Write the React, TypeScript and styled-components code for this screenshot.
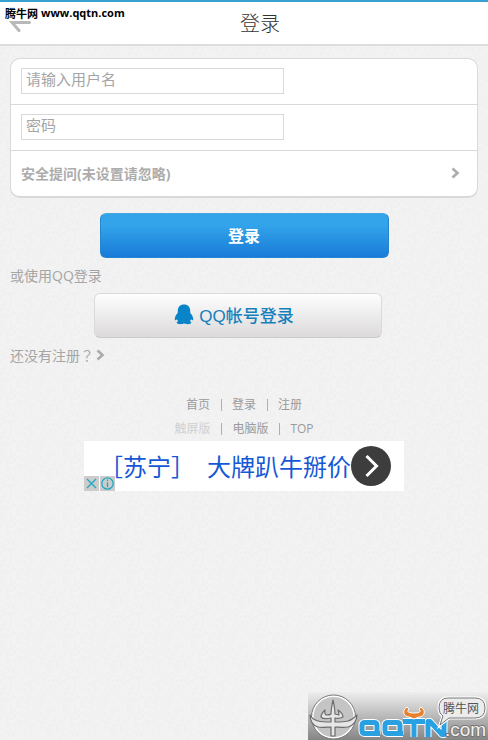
import React from "react";
import styled, { createGlobalStyle } from "styled-components";

const sans = `"Open Sans", "Noto Sans CJK SC", sans-serif`;

const grain =
  "data:image/svg+xml," +
  encodeURIComponent(
    `<svg xmlns="http://www.w3.org/2000/svg" width="64" height="64"><filter id="n"><feTurbulence type="fractalNoise" baseFrequency="0.3" numOctaves="2" stitchTiles="stitch"/><feColorMatrix values="0 0 0 0 0.4  0 0 0 0 0.4  0 0 0 0 0.4  0.12 0 0 0 -0.04"/></filter><rect width="64" height="64" filter="url(#n)"/></svg>`
  );

const GlobalStyle = createGlobalStyle`
  *, *::before, *::after { box-sizing: border-box; }
  body {
    margin: 0;
    background: #f3f3f3 url("${grain}");
    font-family: ${sans};
    font-size: 14px;
    line-height: 20px;
    color: #a5a5a5;
  }
  button, input { font-family: inherit; }
  a { color: inherit; text-decoration: none; }
`;

const Page = styled.div`
  min-height: 100vh;
`;

const Header = styled.header`
  display: flex;
  align-items: center;
  height: 46px;
  border-top: 2px solid #36a0d0;
  border-bottom: 2px solid #dddddd;
  background: #fff;
`;

const BackButton = styled.button`
  display: flex;
  width: 32px;
  padding: 6px 0 0 9px;
  border: 0;
  background: none;
  color: #b9b9b9;
  cursor: pointer;
`;

const Title = styled.h1`
  flex: 1;
  margin: 0;
  font-family: "Noto Sans CJK SC", sans-serif;
  font-size: 20px;
  line-height: 28px;
  font-weight: 300;
  text-align: center;
  color: #333;
`;

const SiteMark = styled.div`
  position: absolute;
  top: 5px;
  left: 5px;
  font: bold 11px/16px "Noto Sans CJK SC", sans-serif;
  color: #000;
  display: flex;
  gap: 3px;
`;

const Latin = styled.span`
  font-family: "Open Sans", sans-serif;
`;

const Main = styled.main`
  padding: 12px 10px 0;
`;

const Card = styled.div`
  border: 1px solid #d9d9d9;
  border-bottom-width: 2px;
  border-radius: 10px;
  background: #fff;
`;

const Field = styled.div`
  padding: 9px 10px 10px;
  border-bottom: 1px solid #d9d9d9;
  line-height: 0;
`;

const TextInput = styled.input`
  width: 263px;
  max-width: 100%;
  height: 26px;
  padding: 0 4px 4px;
  border: 1px solid #d9d9d9;
  background: #fff;
  font-size: 15px;
  color: #555;
  &::placeholder { color: #a5a5a5; opacity: 1; }
`;

const QuestionButton = styled.button`
  display: flex;
  align-items: center;
  justify-content: space-between;
  width: 100%;
  height: 45px;
  padding: 0 17px 1px 10px;
  border: 0;
  background: none;
  font-size: 14px;
  font-weight: bold;
  color: #acacac;
  cursor: pointer;
`;

const LoginButton = styled.button`
  display: block;
  width: 289px;
  max-width: 100%;
  height: 45px;
  margin: 15px auto 8px;
  padding: 0 0 2px;
  border: 1px solid #2585ce;
  border-top-color: #47a8e0;
  border-radius: 6px;
  background: linear-gradient(#33a4ea 25%, #187bd8);
  font-size: 16px;
  font-weight: bold;
  color: #fff;
  cursor: pointer;
`;

const Note = styled.p`
  margin: 0;
`;

const QQRow = styled.div`
  display: flex;
  justify-content: center;
  padding: 7px 12px 7px 0;
`;

const QQButton = styled.button`
  display: flex;
  align-items: center;
  justify-content: center;
  gap: 5px;
  width: 288px;
  max-width: 100%;
  height: 45px;
  padding: 0 8px 2px 0;
  border: 1px solid #dadada;
  border-bottom-color: #cbc9ca;
  border-radius: 6px;
  background: linear-gradient(#fefefe, #dcdadb);
  font-family: "Liberation Sans", "Noto Sans CJK SC", sans-serif;
  font-size: 17px;
  font-weight: 500;
  color: #1680bd;
  cursor: pointer;
`;

const RegisterLink = styled.a`
  display: flex;
  align-items: center;
  gap: 2px;
  width: fit-content;
  font-family: "Noto Sans CJK TC", "Noto Sans CJK SC", sans-serif;
`;

const Footer = styled.footer`
  margin-top: 28px;
  font-size: 12px;
  line-height: 24px;
  color: #9b9b9b;
`;

const LinkRow = styled.nav`
  display: flex;
  justify-content: center;
  align-items: center;
`;

const Divider = styled.span`
  width: 1px;
  height: 12px;
  margin: 0 10px 0 11px;
  background: #b5abb0;
`;

const FootLink = styled.a<{ $current?: boolean }>`
  color: ${(p) => (p.$current ? "#d0d0d0" : "#9b9b9b")};
`;

const Ad = styled.aside`
  position: relative;
  display: flex;
  align-items: center;
  justify-content: flex-end;
  width: 320px;
  max-width: 100%;
  height: 50px;
  padding-right: 13px;
  margin: 0 auto;
  background: #fff;
`;

const AdText = styled.a`
  display: flex;
  gap: 12px;
  font: 400 24px/32px "Noto Sans CJK SC", sans-serif;
  color: #1558d6;
  white-space: nowrap;
`;

const AdGo = styled.button`
  flex: none;
  display: flex;
  width: 40px;
  height: 40px;
  padding: 0;
  border: 0;
  border-radius: 50%;
  background: #3d3d3d;
  cursor: pointer;
`;

const AdBadges = styled.div`
  position: absolute;
  left: 0;
  bottom: 0;
  display: flex;
  gap: 1px;
`;

const AdBadge = styled.button`
  display: flex;
  width: 15px;
  height: 15px;
  padding: 0;
  border: 0;
  background: #ccc;
`;

const Logo = styled.div`
  position: fixed;
  right: 0;
  bottom: 0;
  width: 180px;
  height: 48px;
  background: linear-gradient(#eeeeee, #858585);
`;

const Chevron = () => (
  <svg width="9" height="12" viewBox="0 0 9 12" fill="none" stroke="#acacac" strokeWidth="2.6" aria-hidden="true">
    <path d="M1.5 1.5 6.500 6 1.5 10.500" />
  </svg>
);

export default function App() {
  return (
    <Page>
      <GlobalStyle />
      <Header>
        <BackButton aria-label="返回">
          <svg width="23" height="13" viewBox="0 0 23 13" fill="none" stroke="currentColor" strokeWidth="3" strokeLinecap="round">
            <path d="M20.500 2.500H3L10 10.500" />
          </svg>
        </BackButton>
        <Title>登录</Title>
      </Header>
      <SiteMark>
        腾牛网 <Latin>www.qqtn.com</Latin>
      </SiteMark>
      <Main>
        <form onSubmit={(e) => e.preventDefault()}>
          <Card>
            <Field>
              <TextInput type="text" placeholder="请输入用户名" aria-label="请输入用户名" />
            </Field>
            <Field>
              <TextInput type="password" placeholder="密码" aria-label="密码" />
            </Field>
            <QuestionButton type="button">
              安全提问(未设置请忽略)
              <Chevron />
            </QuestionButton>
          </Card>
          <LoginButton type="submit">登录</LoginButton>
        </form>
        <Note>或使用QQ登录</Note>
        <QQRow>
          <QQButton type="button">
            <svg width="20" height="21" viewBox="0 0 20 21" fill="#0a84c8" aria-hidden="true">
              <path d="M10 .5C6 .5 3.800 3.200 3.800 6.700v2C2.200 10.600.8 13 .8 15.100c0 1.500 1 1.700 2.200.2.300.7.700 1.300 1.200 1.900-1 .3-1.500.8-1.500 1.400 0 1.100 1.600 1.600 3.700 1.600 1.500 0 2.900-.3 3.600-.9.700.6 2.100.9 3.600.9 2.100 0 3.700-.5 3.700-1.600 0-.6-.5-1.100-1.500-1.400.5-.6.9-1.200 1.200-1.900 1.200 1.500 2.200 1.300 2.200-.2 0-2.100-1.400-4.500-3-6.400v-2C16.200 3.200 14 .5 10 .5Z" />
            </svg>
            QQ帐号登录
          </QQButton>
        </QQRow>
        <RegisterLink href="#register">
          还没有注册？
          <Chevron />
        </RegisterLink>
      </Main>
      <Footer>
        <LinkRow>
          <FootLink href="#home">首页</FootLink>
          <Divider />
          <FootLink href="#login">登录</FootLink>
          <Divider />
          <FootLink href="#register">注册</FootLink>
        </LinkRow>
        <LinkRow>
          <FootLink href="#touch" $current>触屏版</FootLink>
          <Divider />
          <FootLink href="#desktop">电脑版</FootLink>
          <Divider />
          <FootLink href="#top">TOP</FootLink>
        </LinkRow>
        <Ad>
          <AdText href="#ad">
            <span>［苏宁］</span>
            <span>大牌趴牛掰价</span>
          </AdText>
          <AdGo aria-label="打开">
            <svg width="40" height="40" viewBox="0 0 40 40" fill="none" stroke="#fff" strokeWidth="3">
              <path d="M15.500 10 25.500 20 15.500 30" />
            </svg>
          </AdGo>
          <AdBadges>
            <AdBadge aria-label="关闭">
              <svg width="15" height="15" viewBox="0 0 15 15" fill="none" stroke="#20a9bf" strokeWidth="1.300">
                <path d="M3 3l9 9M12 3l-9 9" />
              </svg>
            </AdBadge>
            <AdBadge aria-label="广告信息">
              <svg width="15" height="15" viewBox="0 0 15 15" fill="none" stroke="#20a9bf" strokeWidth="1.300">
                <circle cx="7.500" cy="7.500" r="5.700" />
                <path d="M7.500 6.300v5M7.500 3.500v1.600" />
              </svg>
            </AdBadge>
          </AdBadges>
        </Ad>
      </Footer>
      <Logo>
        <svg width="180" height="48" viewBox="0 0 180 48" role="img" aria-label="腾牛网 QQTN.com">
          <circle cx="25.500" cy="25" r="21" fill="#c4c4c4" stroke="#fff" strokeWidth="2" />
          <circle cx="25.500" cy="25" r="22" fill="none" stroke="#777" strokeWidth="1" />
          <path
            d="M2 23c1 2 4 5 8 6 4 1 8 1 13 1v-4c-4 1-8 1-10-1 0-3 2-5 4-7 0 2-1 4 1 5 2 0 4 0 5-1 0-5 1-9 2-14 1 4 2 9 2 14l4 1c0-2 0-3-1-5 3 2 5 4 5 7-2 1-5 2-8 1v4c5 0 9 0 13-1s7-4 9-6c0 6-4 11-9 12-5 1-9 0-13 0v9h-4v-9c-4 0-9 1-13 0-5-1-8-6-8-12Z"
            fill="#e6e6e6"
            stroke="#6d6d6d"
            strokeWidth="1.200"
            strokeLinejoin="round"
          />
          <g fill="none">
            {[
              { color: "#fff", width: 7 },
              { color: "#28a0e2", width: 5 },
            ].map(({ color, width }) => (
              <path
                key={color}
                stroke={color}
                strokeWidth={width}
                strokeLinejoin="round"
                d="M72 41.500H57q-3 0-3-3v-5q0-3 3-3h9q3 0 3 3v9M95 41.500H80q-3 0-3-3v-5q0-3 3-3h9q3 0 3 3v9M95 29.500h22M106 29v16M120 45V29.500h2L134 42.500h2V27"
              />
            ))}
          </g>
          <path d="M99 15c-6 4-3 10 2 10l5 2 5-2c5 0 8-6 2-10l-2 2c3 3 0 4-5 4s-8-1-5-4Z" fill="#e8812e" stroke="#fff" strokeWidth="1" />
          <path d="M140 6h27q10 0 10 10t-10 10h-26l-9 7 3-9q-4-2-4-8 0-10 9-10Z" fill="#ececec" stroke="#fff" strokeWidth="3" />
          <path d="M140 6h27q10 0 10 10t-10 10h-26l-9 7 3-9q-4-2-4-8 0-10 9-10Z" fill="#ececec" stroke="#777" strokeWidth="1" />
          <text x="135" y="21" fontFamily='"Noto Sans CJK SC", sans-serif' fontSize="12" fill="#555">腾牛网</text>
          <text x="137" y="44" fontFamily='"Liberation Sans", sans-serif' fontSize="19" fill="#f0f0f0" stroke="#777" strokeWidth="2" paintOrder="stroke">.com</text>
        </svg>
      </Logo>
    </Page>
  );
}
